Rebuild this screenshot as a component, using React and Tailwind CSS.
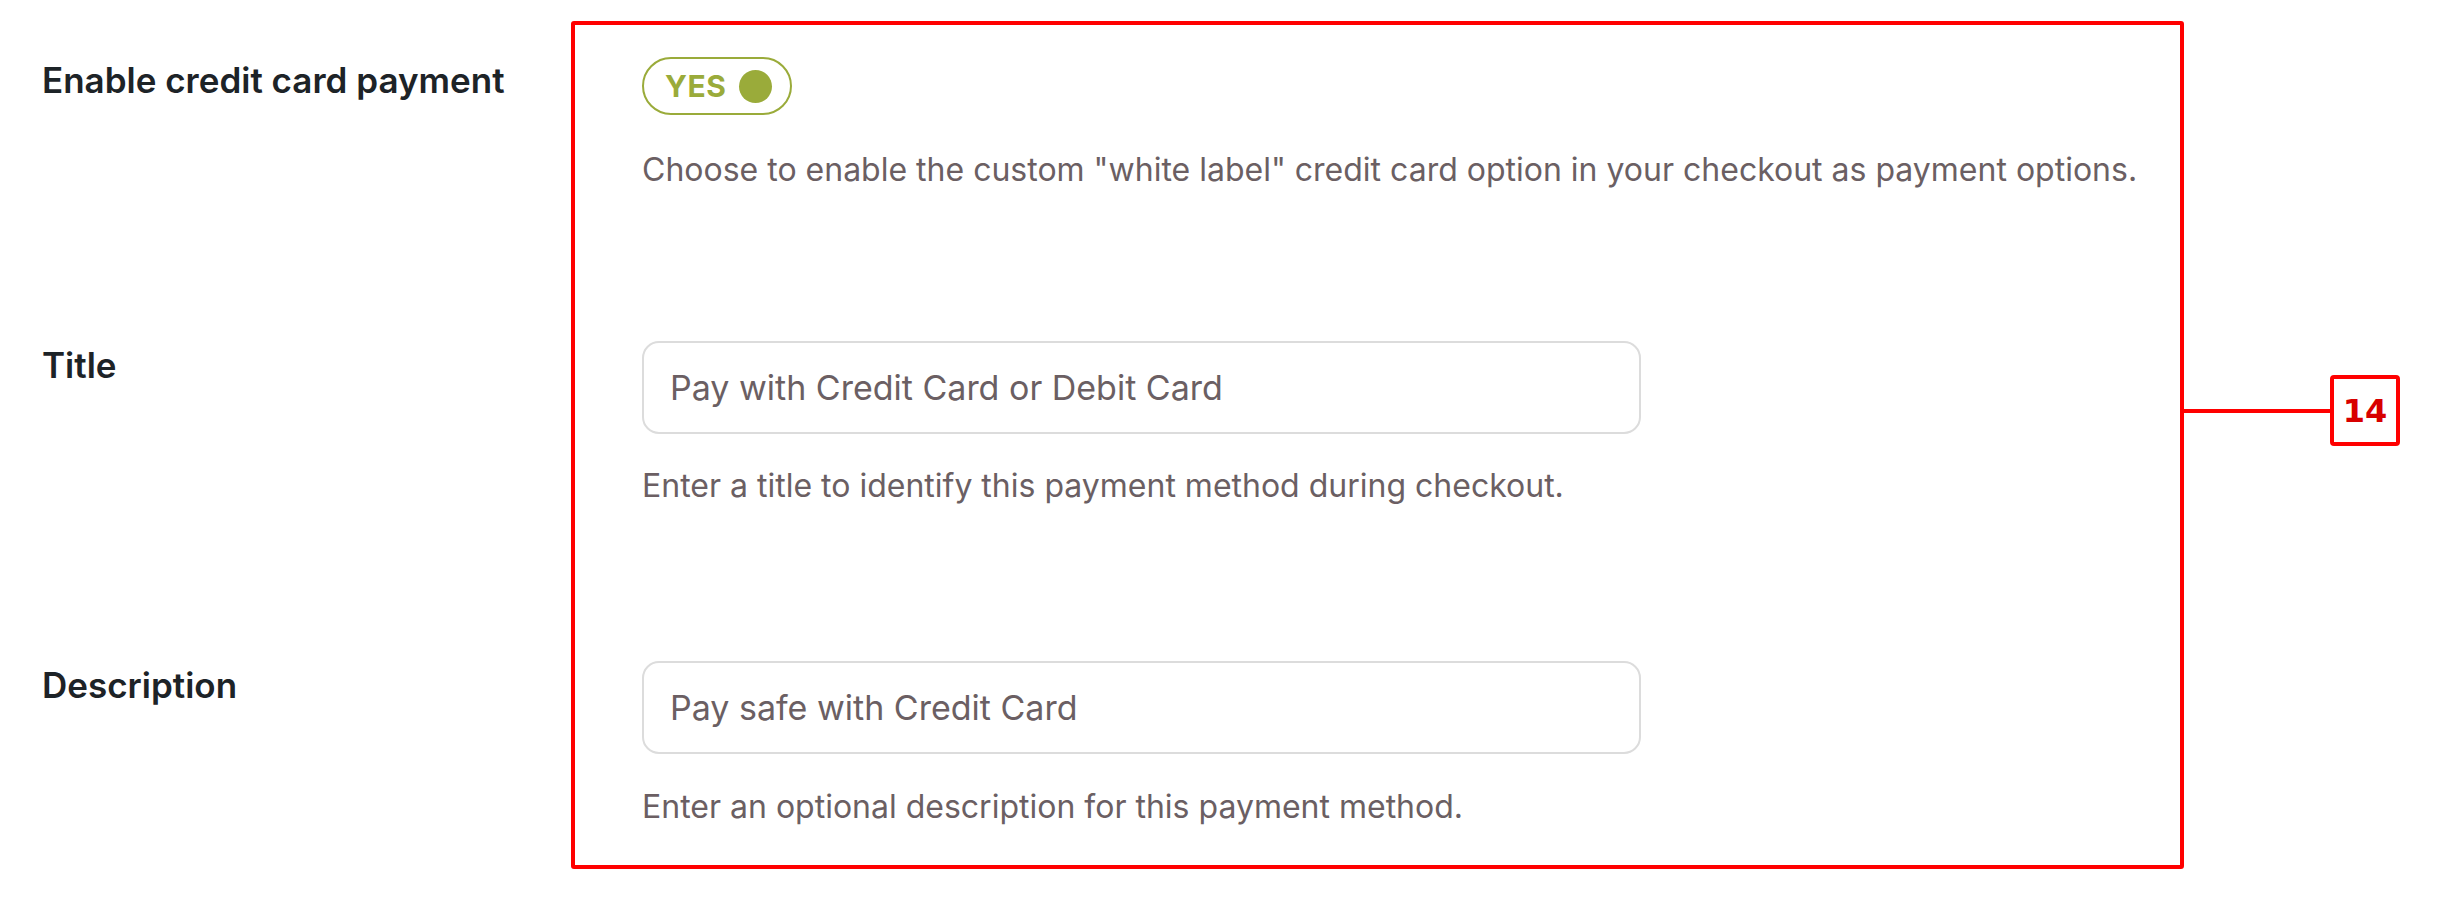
import React from "react";

function Toggle() {
  return (
    <div className="flex items-center w-[150px] h-[58px] rounded-full border-2 border-[#9aab3a] pl-[21px] pr-[18px]">
      <span className="text-[30px] leading-none font-bold text-[#9aab3a] tracking-[0.5px]">YES</span>
      <span className="ml-auto w-[33px] h-[33px] rounded-full bg-[#9aab3a]" />
    </div>
  );
}

function TextInput({ value }) {
  return (
    <div className="flex items-center w-[999px] h-[93px] rounded-[17px] border-2 border-[#dcdcdc] pl-[26px] bg-white">
      <span className="text-[34px] leading-none text-[#6b5f63]">{value}</span>
    </div>
  );
}

function Help({ children, className = "" }) {
  return (
    <p className={"text-[32px] leading-[46px] text-[#6b5f63] " + className}>{children}</p>
  );
}

export default function App() {
  return (
    <div className="min-h-[922px] w-[2448px] bg-white font-['Inter',_sans-serif] flex items-start pl-[42px] pt-[21px]">
      <div className="w-[529px] shrink-0 flex flex-col text-[35px] leading-[40px] font-semibold text-[#1d2327]">
        <div className="mt-[39px]">Enable credit card payment</div>
        <div className="mt-[245px]">Title</div>
        <div className="mt-[280px]">Description</div>
      </div>

      <div className="relative w-[1613px] border-4 border-[#ff0000] rounded-[3px] pl-[67px] pt-[32px] pb-[35px] flex flex-col items-start">
        <Toggle />
        <Help className="mt-[32px]">
          Choose to enable the custom "white label" credit card option in your checkout as payment options.
        </Help>

        <div className="mt-[148px]">
          <TextInput value="Pay with Credit Card or Debit Card" />
        </div>
        <Help className="mt-[29px]">Enter a title to identify this payment method during checkout.</Help>

        <div className="mt-[152px]">
          <TextInput value="Pay safe with Credit Card" />
        </div>
        <Help className="mt-[30px]">Enter an optional description for this payment method.</Help>

        <div className="absolute left-full top-[350px] flex items-center">
          <div className="w-[150px] h-[4px] bg-[#ff0000]" />
          <div className="w-[70px] h-[71px] border-4 border-[#ff0000] rounded-[4px] bg-white flex items-center justify-center">
            <span className="font-['DejaVu_Sans',_sans-serif] font-bold text-[32px] leading-none text-[#d80000]">14</span>
          </div>
        </div>
      </div>
    </div>
  );
}
